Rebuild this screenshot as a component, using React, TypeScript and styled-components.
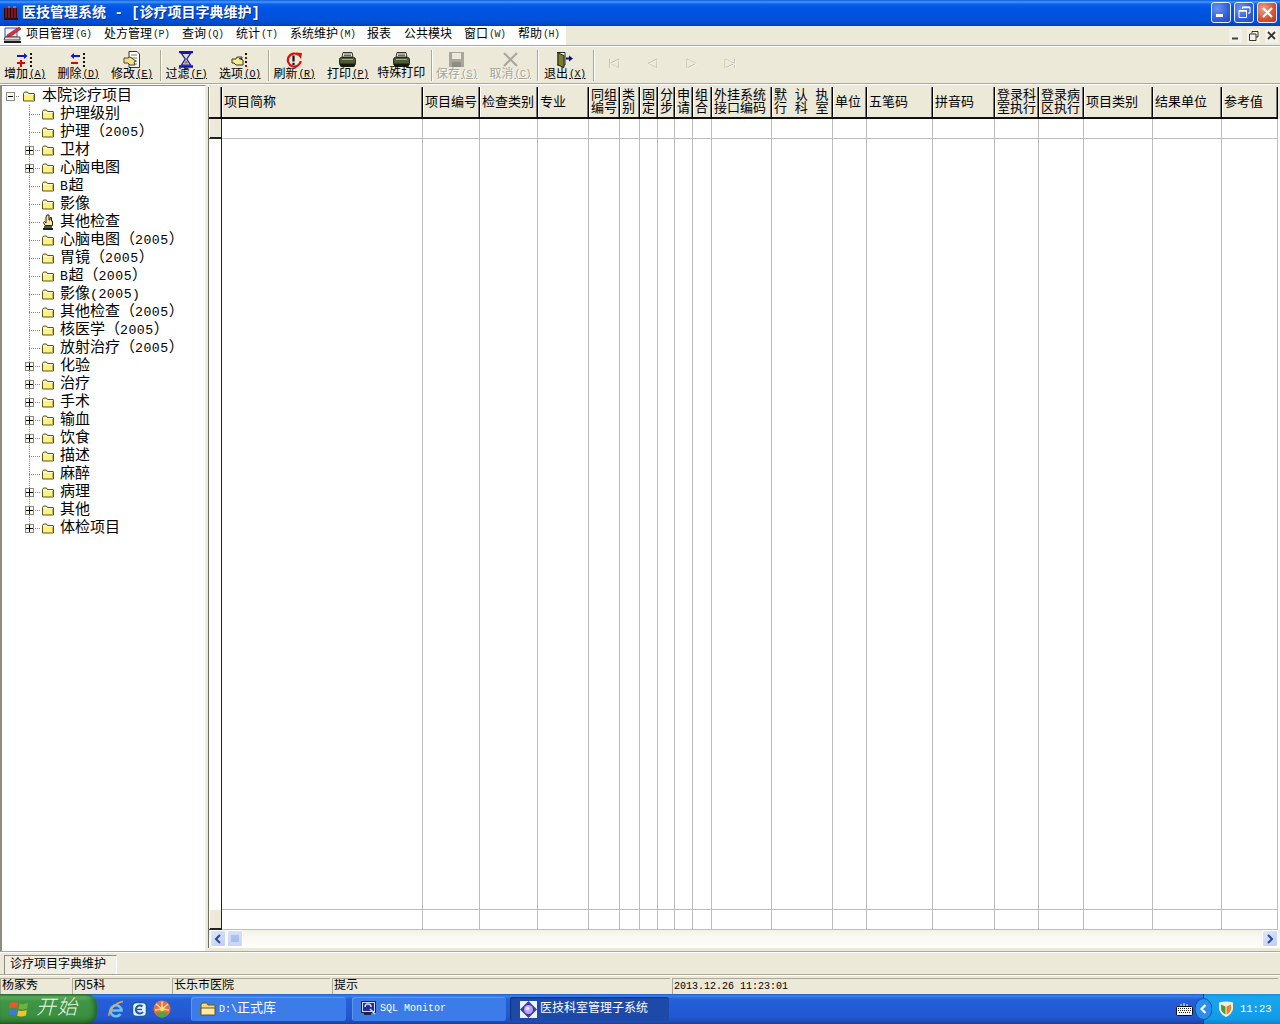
import React from "react";
import styled, { createGlobalStyle } from "styled-components";

const FONT = `"Liberation Mono", "Noto Sans CJK SC", monospace`;
const BEIGE = "#ece9d8";

const Global = createGlobalStyle`
  html, body { margin: 0; padding: 0; background: ${BEIGE}; }
  * { box-sizing: border-box; }
`;

const Desktop = styled.div`
  width: 1280px; height: 1024px; overflow: hidden; display: flex; flex-direction: column;
  background: ${BEIGE}; color: #000; font: 12px/14px ${FONT};
`;

/* ---------- title bar ---------- */
const TitleBar = styled.div`
  height: 26px; flex: none; display: flex; align-items: center; padding: 0 3px 1px 3px;
  background: linear-gradient(180deg, #0a5ee0 0, #4a96f5 2px, #0a62ea 4px, #0055e5 8px, #0052dc 17px, #0050d8 21px, #0246c8 24px, #0340b0 26px);
`;
const TitleText = styled.div`
  flex: 1; font-size: 14px; font-weight: 700; color: #fff; white-space: pre;
  text-shadow: 1px 1px 0 #0a2f90;
`;
const WinBtnRow = styled.div` display: flex; gap: 3px; margin-bottom: 1px; `;
const WinBtn = styled.div<{ $close?: boolean }>`
  width: 20px; height: 21px; border: 1px solid #e8eefc; border-radius: 3px; display: flex;
  align-items: center; justify-content: center;
  background: ${(p) => p.$close
    ? "radial-gradient(circle at 30% 30%, #f0a088, #d8502c 60%, #b83818)"
    : "radial-gradient(circle at 30% 30%, #6a94ee, #2f5fd8 60%, #1e48c0)"};
`;

/* ---------- menu bar ---------- */
const MenuBar = styled.div`
  height: 20px; flex: none; display: flex; align-items: center; background: ${BEIGE};
  border-bottom: 1px solid #aca899; box-shadow: 0 1px 0 #fff;
`;
const MenuList = styled.div`
  width: 566px; height: 19px; display: flex; align-items: center; background: #fff; padding: 0 0 2px 3px;
`;
const MenuIconSlot = styled.div` width: 23px; height: 18px; flex: none; `;
const MenuItem = styled.span<{ $w: number }>`
  width: ${(p) => p.$w}px; flex: none; white-space: nowrap; font-size: 12px;
`;
const Key = styled.span`
  font-size: 10px; letter-spacing: -0.5px; color: #222; margin-left: 1px; vertical-align: 1px;
`;
const MdiButtons = styled.div`
  margin-left: auto; display: flex; gap: 5px; padding-right: 2px; align-items: center;
`;
const MdiBtn = styled.div`
  width: 13px; height: 14px; display: flex; align-items: center; justify-content: center; background: #f4f2e8;
`;

/* ---------- toolbar ---------- */
const Toolbar = styled.div`
  height: 37px; flex: none; margin-top: 1px; display: flex; align-items: stretch; padding-left: 0;
  border-bottom: 1px solid #aca899; background: ${BEIGE}; box-shadow: 0 1px 0 #fff;
  & > :first-child { margin-left: -2px; }
`;
const ToolBtn = styled.div<{ $off?: boolean }>`
  width: 53.5px; flex: none; display: flex; flex-direction: column; align-items: center;
  padding-top: 4px; font-size: 12px; white-space: nowrap;
  color: ${(p) => (p.$off ? "#a5a294" : "#000")};
  text-shadow: ${(p) => (p.$off ? "1px 1px 0 #fff" : "none")};
`;
const NavBtn = styled.div`
  width: 38px; flex: none; display: flex; justify-content: center; padding-top: 11px;
`;
const ToolIcon = styled.div` height: 17px; display: flex; align-items: center; justify-content: center; `;
const ToolLabel = styled.div` line-height: 13px; `;
const ToolKey = styled.span`
  font-size: 10px; letter-spacing: -0.5px; margin-left: 1px; text-decoration: underline; vertical-align: 1px;
`;
const Sep = styled.div<{ $l: number; $r: number }>`
  width: 2px; flex: none; margin: 3px ${(p) => p.$r}px 2px ${(p) => p.$l}px;
  border-left: 1px solid #aca899; border-right: 1px solid #fff;
`;

/* ---------- main ---------- */
const Main = styled.div`
  flex: 1; min-height: 0; display: flex; padding-top: 3px;
`;
const TreePanel = styled.div`
  width: 206px; flex: none; background: #fff; border-left: 2px solid #8f8c7e; border-top: 1px solid #8f8c7e;
  border-right: 1px solid #f0eee4; margin-top: -2px;
  padding-top: 1px;
`;
const TreeRow = styled.div`
  height: 18px; display: flex; align-items: stretch; font-size: 15px; line-height: 20px; white-space: nowrap;
`;
const Branch = styled.div<{ $last?: boolean }>`
  flex: none; display: flex; align-items: center; justify-content: center;
  width: 21px; margin-left: 19px; padding-right: 5px;
  background-image:
    repeating-linear-gradient(90deg, #8a8a8a 0 1px, transparent 1px 2px),
    repeating-linear-gradient(180deg, #8a8a8a 0 1px, transparent 1px 2px);
  background-repeat: no-repeat;
  background-size: 12px 1px, 1px ${(p) => (p.$last ? 9 : 18)}px;
  background-position: 8px 9px, 8px 0;
`;
const RootBranch = styled.div`
  flex: none; width: 17px; margin-right: 4px; display: flex; align-items: center; justify-content: center;
  background-image: repeating-linear-gradient(90deg, #8a8a8a 0 1px, transparent 1px 2px);
  background-repeat: no-repeat;
  background-size: 8px 1px;
  background-position: 12px 9px;
`;
const Expander = styled.div`
  width: 9px; height: 9px; border: 1px solid #8a8a80; background: #f6f5ee; display: flex;
  align-items: center; justify-content: center; color: #000;
`;
const FolderSlot = styled.div` width: 13px; flex: none; display: flex; align-items: center; `;
const TreeLabel = styled.span` margin-left: 5px; `;
const RootLabel = styled.span` margin-left: 6px; `;
const Num = styled.span` font-size: 13.2px; letter-spacing: .5px; `;
const Splitter = styled.div` width: 2px; flex: none; background: ${BEIGE}; `;

const GridPanel = styled.div`
  flex: 1; min-width: 0; display: flex; flex-direction: column; background: ${BEIGE};
`;
const COLS = [13, 201, 57, 58, 51, 31, 20, 18, 17, 18, 19, 60, 61, 34, 66, 62, 44, 45, 69, 69, 56];
const template = COLS.map((c) => `${c}px`).join(" ");

const GridFrame = styled.div`
  flex: none; border-left: 1px solid #6f6d62; background: #fff; height: 861px; display: flex; flex-direction: column;
`;
const HeaderRow = styled.div`
  height: 32px; flex: none; display: grid; grid-template-columns: ${template}; background: ${BEIGE};
`;
const HeaderCell = styled.div`
  background: ${BEIGE}; border-right: 1px solid #000; border-bottom: 2px solid #111;
  box-shadow: inset -1px 0 0 #777, inset 1px 0 0 #fff;
  display: flex; flex-direction: column; justify-content: center; padding-left: 2px;
  font-size: 13px; line-height: 13px; white-space: nowrap; overflow: hidden;
`;
const HeaderLine = styled.span<{ $spread?: boolean }>`
  display: block; ${(p) => (p.$spread ? "text-align-last: justify; padding-right: 5px;" : "")}
`;
const BodyRow = styled.div<{ $h?: number }>`
  display: grid; grid-template-columns: ${template}; flex: ${(p) => (p.$h ? `0 0 ${p.$h}px` : "1")};
  min-height: 0;
`;
const Cell = styled.div` border-right: 1px solid #bdbdbd; border-bottom: 1px solid #bdbdbd; `;
const IndicatorCell = styled.div<{ $plain?: boolean }>`
  border-right: 1px solid #222;
  ${(p) => (p.$plain ? "background:#fff;" : `background:${BEIGE}; border-bottom:2px solid #222; border-left:1px solid #fff;`)}
`;

const HScroll = styled.div`
  height: 18px; flex: none; display: flex; align-items: stretch; padding: 0 0 0 1px;
  background: linear-gradient(180deg, #f3f1e6 0, #f8f7f0 30%, #fefefb 100%);
`;
const ScrollBtn = styled.div`
  width: 16px; height: 17px; flex: none; border: 1px solid #fff; border-radius: 2px;
  background: linear-gradient(135deg, #dfe8fb, #bccdf5); display: flex; align-items: center; justify-content: center;
`;
const ScrollThumb = styled.div`
  width: 16px; height: 17px; flex: none; margin-left: 1px; border: 1px solid #fff; border-radius: 2px;
  background: linear-gradient(180deg, #d6e0f8, #c6d4f6); display: flex; align-items: center; justify-content: center;
`;
const ScrollFill = styled.div` flex: 1; `;
const ScrollEnd = styled.div` width: 2px; flex: none; `;

/* ---------- tab and status ---------- */
const TabBar = styled.div`
  height: 24px; flex: none; padding: 3px 0 0 4px; display: flex; align-items: flex-start;
  border-top: 1px solid #aca899; border-bottom: 1px solid #aca899; box-shadow: inset 0 1px 0 #fff;
`;
const Tab = styled.div`
  width: 113px; height: 19px; padding: 2px 0 0 5px; font-size: 12px; line-height: 15px; white-space: nowrap;
  border-left: 1px solid #8f8c7e; border-top: 1px solid #8f8c7e; border-right: 1px solid #fff; background: #f1efe4;
`;
const StatusBar = styled.div`
  height: 19px; flex: none; display: flex; gap: 2px; padding-top: 2px; border-top: 1px solid #fff;
`;
const StatusCell = styled.div<{ $w: number; $mono?: boolean }>`
  width: ${(p) => p.$w}px; flex: none; height: 17px; padding: 0 0 0 1px; white-space: nowrap; overflow: hidden;
  border-left: 1px solid #aca899; border-top: 1px solid #aca899; line-height: 15px;
  font-size: ${(p) => (p.$mono ? 10 : 12)}px;
`;

/* ---------- taskbar ---------- */
const Taskbar = styled.div`
  height: 30px; flex: none; display: flex; align-items: stretch; color: #fff;
  background: linear-gradient(180deg, #1f5cc8 0, #3a82ee 2px, #2560d8 5px, #2258d2 22px, #1e4fbe 27px, #1a3f9a 30px);
`;
const StartBtn = styled.div`
  width: 97px; flex: none; display: flex; align-items: center; padding-left: 9px; gap: 7px;
  border-radius: 0 11px 11px 0;
  background: linear-gradient(180deg, #2f7a3c 0, #5fae5c 3px, #3f9645 7px, #3a8f40 22px, #2c7a30 28px, #245f28 30px);
  box-shadow: inset -3px 0 4px rgba(10,50,10,.45);
`;
const StartText = styled.span`
  font-size: 20px; font-style: italic; color: #f2f6ee; letter-spacing: 1px; font-weight: 300;
`;
const Quick = styled.div`
  width: 94px; flex: none; display: flex; align-items: center; gap: 5px; padding-left: 10px;
`;
const TaskBtn = styled.div<{ $active?: boolean; $w: number; $gap: number }>`
  width: ${(p) => p.$w}px; margin-right: ${(p) => p.$gap}px; flex: none; height: 24px; align-self: center;
  display: flex; align-items: center; gap: 3px; padding-left: ${(p) => (p.$active ? 10 : 9)}px;
  border-radius: 3px; font-size: 10px; white-space: nowrap;
  background: ${(p) => (p.$active ? "#1d4aa8" : "#3c7ce8")};
  box-shadow: ${(p) => (p.$active ? "inset 1px 1px 1px #123578" : "inset 1px 1px 0 #5f98f0")};
`;
const TaskZh = styled.span` font-size: 13px; `;
const TaskTitle = styled.span` font-size: 12px; `;
const Spacer = styled.div` flex: 1; `;
const BarIcon = styled.div` width: 18px; flex: none; align-self: center; display: flex; margin-right: 9px; `;
const Tray = styled.div`
  width: 77px; flex: none; display: flex; align-items: center; gap: 7px; padding-left: 9px; font-size: 10.5px;
  background: linear-gradient(180deg, #1790dc 0, #18a6ee 3px, #129be8 25px, #0f80cc 30px);
  border-left: 1px solid #0a3a8a;
`;
const TrayChevron = styled.div`
  width: 17px; height: 22px; flex: none; margin-left: -9px; margin-right: -9px; position: relative; left: -9px;
`;

/* ---------- icons ---------- */
const Folder = () => (
  <svg width="12" height="11" viewBox="0 0 12 11">
    <path d="M.5 2.500 L1.500 1 H4.500 L5.500 2.500 H11 Q11.500 2.500 11.500 3 V10 H.5Z" fill="#fff27a" stroke="#55532a" />
    <path d="M1 3.500H11" stroke="#fffdd0" />
    <path d="M10.500 4V10" stroke="#c9b84a" />
  </svg>
);
const HandIcon = () => (
  <svg width="12" height="17" viewBox="0 0 12 17">
    <path d="M5 1h2v5h1V3.500h1.500V7h1v4.500H3L1.500 8.500 2.500 7.500 4 9V3Z" fill="#f3e9a0" stroke="#2a2410" strokeWidth="1" />
    <rect x="2" y="12" width="8" height="2" fill="#5a5a40" />
    <rect x="1" y="14" width="10" height="2" fill="#08203a" />
  </svg>
);
const AppMark = () => (
  <svg width="19" height="18" viewBox="0 0 19 18">
    <rect x="1" y="4" width="14" height="11" fill="#1c0a0e" />
    <path d="M3 4v11M6 3v12M9 3v12M12 3v12M14.500 4v11" stroke="#a81c28" strokeWidth="1.400" />
    <path d="M5 3h2M10 3h3" stroke="#c8a860" />
    <rect x="1" y="14" width="14" height="2" fill="#2a1010" />
  </svg>
);
const MenuMark = () => (
  <svg width="20" height="18" viewBox="0 0 20 18">
    <path d="M2 2H14V11H2Z" fill="#eef0fa" stroke="#3a50a8" />
    <path d="M4 9L16 1l2 2L7 11H4Z" fill="#e02e38" stroke="#8a1a20" strokeWidth=".6" />
    <path d="M2 11h15v3H1Z" fill="#e7e2d0" stroke="#444" />
    <path d="M1 15h17v2H1Z" fill="#1a1a1a" />
  </svg>
);
const AddIcon = ({ minus }: { minus?: boolean }) => (
  <svg width="18" height="16" viewBox="0 0 18 16">
    {minus ? (
      <>
        <path d="M3 4 H11" stroke="#1414c0" strokeWidth="2" />
        <path d="M5 1v6L1.500 4Z" fill="#1414c0" />
        <path d="M2 11h7" stroke="#e00000" strokeWidth="2" />
      </>
    ) : (
      <>
        <path d="M1 4 H9" stroke="#1414c0" strokeWidth="2" />
        <path d="M8 1v6l3.500-3Z" fill="#1414c0" />
        <path d="M1 11h8M5 8v7" stroke="#e00000" strokeWidth="2" />
      </>
    )}
    <path d="M15 1v2M15 5v2M15 9v2M15 13v2" stroke="#111" strokeWidth="2" />
  </svg>
);
const EditIcon = () => (
  <svg width="18" height="17" viewBox="0 0 18 17">
    <path d="M6 .5H14L16.500 3V16.500H6Z" fill="#fff" stroke="#333" />
    <path d="M8 4h6M8 7h6M8 10h6M8 13h6" stroke="#777" />
    <path d="M1 7h4l2-1 6 4-2 1 1 3-5 0-2-2H1Z" fill="#f7e27a" stroke="#444" />
  </svg>
);
const GlassIcon = () => (
  <svg width="14" height="17" viewBox="0 0 14 17">
    <path d="M0 1h14M0 15.500h14" stroke="#1616a8" strokeWidth="2.400" />
    <path d="M2.500 2.500H11.500L7.800 8l3.700 6H2.500L6.200 8Z" fill="#dcd8b8" stroke="#1616a8" strokeWidth="1.200" />
    <path d="M5 12.500L7 9l2 3.500Z" fill="#8a7a30" />
  </svg>
);
const OptionIcon = () => (
  <svg width="18" height="16" viewBox="0 0 18 16">
    <path d="M1 7h4l1-2h5v1.500H8L12 8v5H5L3 11H1Z" fill="#f6ee82" stroke="#333" />
    <path d="M15 1v2M15 9v2" stroke="#111" strokeWidth="2" />
    <path d="M15 5v2M15 13v2" stroke="#c00000" strokeWidth="2" />
  </svg>
);
const RefreshIcon = () => (
  <svg width="17" height="16" viewBox="0 0 17 16">
    <path d="M12.500 3A6.500 6.500 0 1 0 14.800 9" fill="none" stroke="#e00c0c" strokeWidth="2.200" />
    <path d="M10 .5L16 1l-1 6Z" fill="#e00c0c" />
    <path d="M7.500 3.500v6" stroke="#111" strokeWidth="2.200" />
    <rect x="6.400" y="10.800" width="2.200" height="2.200" fill="#111" />
  </svg>
);
const PrinterIcon = () => (
  <svg width="17" height="16" viewBox="0 0 17 16">
    <path d="M4 .5H13L14 5H3Z" fill="#ecebdc" stroke="#333" />
    <path d="M5 2h7M5 3.500h7" stroke="#666" />
    <rect x=".5" y="5.500" width="16" height="8" rx="2" fill="#4e5c34" stroke="#22280f" />
    <path d="M1 11.500H16V13.500Q16 15 14 15H3Q1 15 1 13.500Z" fill="#171a0a" />
    <path d="M3 7.500H14" stroke="#a2b070" />
  </svg>
);
const SaveIcon = () => (
  <svg width="15" height="15" viewBox="0 0 15 15">
    <rect x="0" y="0" width="15" height="15" fill="#a9a79c" />
    <rect x="3" y="1" width="9" height="6" fill="#ece9d8" />
    <rect x="3" y="10" width="9" height="5" fill="#8e8c82" />
  </svg>
);
const CancelIcon = () => (
  <svg width="15" height="15" viewBox="0 0 15 15">
    <path d="M1 1L14 14M14 1L1 14" stroke="#aaa89c" strokeWidth="2.200" />
  </svg>
);
const ExitIcon = () => (
  <svg width="16" height="16" viewBox="0 0 16 16">
    <path d="M0 .5H8V13H0Z" fill="#fff" stroke="#222" />
    <path d="M1 1L7 3.500V15.500L1 13Z" fill="#7f7f22" stroke="#222" />
    <path d="M9 6.500h4" stroke="#10107a" strokeWidth="2" />
    <path d="M12 3.500v6L16 6.500Z" fill="#10107a" />
  </svg>
);
const NavIcon = ({ d }: { d: string }) => (
  <svg width="14" height="11" viewBox="0 0 14 11">
    <path d={d} fill="none" stroke="#b8b5a6" />
    <path d={d} fill="none" stroke="#fff" transform="translate(.6 .6)" opacity=".6" />
  </svg>
);
const Plus = () => (
  <svg width="7" height="7" viewBox="0 0 7 7"><path d="M0 3.500H7M3.500 0V7" stroke="#000" /></svg>
);
const Minus = () => (
  <svg width="7" height="7" viewBox="0 0 7 7"><path d="M1 3.500H6" stroke="#000" /></svg>
);
const WinFlag = () => (
  <svg width="20" height="18" viewBox="0 0 20 18">
    <path d="M1 3Q4 1 9 3L8 8.500Q4 6.500 0 8.500Z" fill="#e8592c" />
    <path d="M10.500 3.500Q14 5 19 3L18 8.500Q14 10 9.500 9Z" fill="#6fb33a" />
    <path d="M0 10Q4 8 8 10L7 16Q3 14 -1 16Z" fill="#3f78d8" />
    <path d="M9.200 10.500Q13 11.500 17.800 10L17 15.500Q13 17 8.200 16Z" fill="#f2c02c" />
  </svg>
);
const IeIcon = () => (
  <svg width="19" height="19" viewBox="0 0 19 19">
    <path d="M4 10.500H14.500A5.500 5.500 0 1 0 13.500 14" fill="none" stroke="#6cc3f4" strokeWidth="2.600" />
    <path d="M2 16C1 11 8 3 16 1.500" fill="none" stroke="#f0a83c" strokeWidth="1.400" />
  </svg>
);
const MailIcon = () => (
  <svg width="17" height="17" viewBox="0 0 17 17">
    <rect x="1.500" y="1.500" width="14" height="14" rx="4" fill="#e8f2fc" stroke="#1a58a8" strokeWidth="1.500" />
    <path d="M11.500 5.500A4 4 0 1 0 12 11" fill="none" stroke="#1a58a8" strokeWidth="2" />
    <path d="M6 8.500H11" stroke="#1a58a8" strokeWidth="1.500" />
  </svg>
);
const OrangeIcon = () => (
  <svg width="18" height="18" viewBox="0 0 18 18">
    <circle cx="9" cy="9" r="8.500" fill="#e6713c" />
    <path d="M9 9V1.500M9 9L3 4M9 9L15 4M9 9L2 10M9 9L16 10" stroke="#ffd9a8" strokeWidth="1.500" />
    <circle cx="9" cy="9" r="2.200" fill="#f7e46a" />
    <path d="M3 13.500Q9 10.500 15 13.500Q12 17.500 9 17.500T3 13.500Z" fill="#49a44a" />
  </svg>
);
const TaskFolder = () => (
  <svg width="16" height="14" viewBox="0 0 16 14">
    <path d="M1 3L2 1H7L8 3H15V13H1Z" fill="#f7d774" stroke="#6a5a20" />
    <path d="M1 6H15V13H1Z" fill="#ffeca8" stroke="#6a5a20" />
  </svg>
);
const MonitorIcon = () => (
  <svg width="16" height="16" viewBox="0 0 16 16">
    <rect x=".5" y=".5" width="14" height="11" fill="#d8d8e8" stroke="#20203a" />
    <rect x="2" y="2" width="11" height="8" fill="#2a2a9a" />
    <path d="M4 6a3 3 0 0 1 6 0M9 8l5 5" stroke="#c0e0ff" strokeWidth="1.500" fill="none" />
    <path d="M3 13H10" stroke="#20203a" strokeWidth="2" />
  </svg>
);
const DiamondIcon = () => (
  <svg width="17" height="17" viewBox="0 0 17 17">
    <rect width="17" height="17" fill="#eef2fc" />
    <path d="M8.500 0L17 8.500 8.500 17 0 8.500Z" fill="#3a3aa8" />
    <circle cx="8.500" cy="8.500" r="4.500" fill="#b7a3f2" />
    <circle cx="7.500" cy="7.500" r="2" fill="#e8e0ff" />
  </svg>
);
const KeyboardIcon = () => (
  <svg width="17" height="13" viewBox="0 0 17 13">
    <rect x=".5" y="3.500" width="16" height="9" rx="1" fill="#f4f4f4" stroke="#111" />
    <path d="M2 5.500H15M2 7.500H15M3 9.500H14" stroke="#222" strokeDasharray="1 1" />
    <path d="M5 1v2M8 0v3M11 1v2" stroke="#fff" />
  </svg>
);
const Chevron = () => (
  <svg width="17" height="22" viewBox="0 0 17 22">
    <ellipse cx="8.500" cy="11" rx="8.500" ry="10.500" fill="#2b8ee8" stroke="#1650b0" />
    <path d="M10.500 7L6.500 11l4 4" stroke="#fff" strokeWidth="2.200" fill="none" />
  </svg>
);
const ShieldIcon = () => (
  <svg width="14" height="16" viewBox="0 0 14 16">
    <path d="M0 1.500Q7 -.5 14 1.500V8Q13 13 7 16Q1 13 0 8Z" fill="#f4efdc" />
    <path d="M2 3.500L6.500 5.500V13.500Q2 11 2 7.500Z" fill="#4f9c3a" />
    <path d="M12 3.500L7.500 5.500V13.500Q12 11 12 7.500Z" fill="#e5842a" />
  </svg>
);

/* ---------- data ---------- */
const MENUS: [string, string, number][] = [
  ["项目管理", "(G)", 78], ["处方管理", "(P)", 78], ["查询", "(Q)", 54], ["统计", "(T)", 54],
  ["系统维护", "(M)", 77], ["报表", "", 37], ["公共模块", "", 60], ["窗口", "(W)", 54], ["帮助", "(H)", 48],
];
const HEADERS: { lines: string[]; spread?: boolean }[] = [
  { lines: [""] }, { lines: ["项目简称"] }, { lines: ["项目编号"] }, { lines: ["检查类别"] }, { lines: ["专业"] },
  { lines: ["同组", "编号"] }, { lines: ["类", "别"] }, { lines: ["固", "定"] }, { lines: ["分", "步"] },
  { lines: ["申", "请"] }, { lines: ["组", "合"] }, { lines: ["外挂系统", "接口编码"] },
  { lines: ["默 认 执", "行 科 室"], spread: true }, { lines: ["单位"] }, { lines: ["五笔码"] }, { lines: ["拼音码"] },
  { lines: ["登录科", "室执行"] }, { lines: ["登录病", "区执行"] }, { lines: ["项目类别"] }, { lines: ["结果单位"] }, { lines: ["参考值"] },
];
type Node = { label: string; plus?: boolean; hand?: boolean };
const TREE: Node[] = [
  { label: "护理级别" }, { label: "护理（2005）" }, { label: "卫材", plus: true }, { label: "心脑电图", plus: true },
  { label: "B超" }, { label: "影像" }, { label: "其他检查", hand: true }, { label: "心脑电图（2005）" },
  { label: "胃镜（2005）" }, { label: "B超（2005）" }, { label: "影像(2005)" }, { label: "其他检查（2005）" },
  { label: "核医学（2005）" }, { label: "放射治疗（2005）" }, { label: "化验", plus: true }, { label: "治疗", plus: true },
  { label: "手术", plus: true }, { label: "输血", plus: true }, { label: "饮食", plus: true }, { label: "描述" },
  { label: "麻醉" }, { label: "病理", plus: true }, { label: "其他", plus: true }, { label: "体检项目", plus: true },
];
const withNums = (s: string) =>
  s.split(/([A-Za-z0-9()]+)/).map((part, i) => (i % 2 ? <Num key={i}>{part}</Num> : part));

const Tool = ({ icon, label, k, off }: { icon: React.ReactNode; label: string; k: string; off?: boolean }) => (
  <ToolBtn $off={off}>
    <ToolIcon>{icon}</ToolIcon>
    <ToolLabel>{label}<ToolKey>({k})</ToolKey></ToolLabel>
  </ToolBtn>
);

export default function App() {
  return (
    <Desktop>
      <Global />
      <TitleBar>
        <AppMark />
        <TitleText>医技管理系统 - [诊疗项目字典维护]</TitleText>
        <WinBtnRow>
          <WinBtn><svg width="12" height="12" viewBox="0 0 12 12"><rect x="1" y="8" width="7" height="3" fill="#fff" /></svg></WinBtn>
          <WinBtn><svg width="13" height="13" viewBox="0 0 13 13"><path d="M4.500 3V1H12V7H10M1 4.500H8.500V11.500H1Z" fill="none" stroke="#fff" /><path d="M4 1.500H12M1 5H8.500" stroke="#fff" strokeWidth="1.500" /></svg></WinBtn>
          <WinBtn $close><svg width="13" height="13" viewBox="0 0 13 13"><path d="M2 2L11 11M11 2L2 11" stroke="#fff" strokeWidth="2.200" /></svg></WinBtn>
        </WinBtnRow>
      </TitleBar>

      <MenuBar>
        <MenuList>
          <MenuIconSlot><MenuMark /></MenuIconSlot>
          {MENUS.map(([t, k, w]) => (
            <MenuItem key={t} $w={w}>{t}{k && <Key>{k}</Key>}</MenuItem>
          ))}
        </MenuList>
        <MdiButtons>
          <MdiBtn><svg width="9" height="9" viewBox="0 0 9 9"><path d="M1 7.500H7" stroke="#444" strokeWidth="2" /></svg></MdiBtn>
          <MdiBtn><svg width="10" height="10" viewBox="0 0 10 10"><path d="M3 2.500V.5H9V6H7M.5 3H7V9.500H.5Z" fill="none" stroke="#333" /></svg></MdiBtn>
          <MdiBtn><svg width="9" height="9" viewBox="0 0 9 9"><path d="M1 1L8 8M8 1L1 8" stroke="#333" strokeWidth="1.800" /></svg></MdiBtn>
        </MdiButtons>
      </MenuBar>

      <Toolbar>
        <Tool icon={<AddIcon />} label="增加" k="A" />
        <Tool icon={<AddIcon minus />} label="删除" k="D" />
        <Tool icon={<EditIcon />} label="修改" k="E" />
        <Sep $l={1} $r={-2} />
        <Tool icon={<GlassIcon />} label="过滤" k="F" />
        <Tool icon={<OptionIcon />} label="选项" k="O" />
        <Sep $l={1} $r={-2} />
        <Tool icon={<RefreshIcon />} label="刷新" k="R" />
        <Tool icon={<PrinterIcon />} label="打印" k="P" />
        <ToolBtn>
          <ToolIcon><PrinterIcon /></ToolIcon>
          <ToolLabel>特殊打印</ToolLabel>
        </ToolBtn>
        <Sep $l={3} $r={-3} />
        <Tool icon={<SaveIcon />} label="保存" k="S" off />
        <Tool icon={<CancelIcon />} label="取消" k="C" off />
        <Sep $l={0} $r={-1} />
        <Tool icon={<ExitIcon />} label="退出" k="X" />
        <Sep $l={1} $r={1} />
        <NavBtn><NavIcon d="M1.500 1V10M1.500 5.500L11 1V10Z" /></NavBtn>
        <NavBtn><NavIcon d="M2 5.500L11 1V10Z" /></NavBtn>
        <NavBtn><NavIcon d="M12 5.500L3 1V10Z" /></NavBtn>
        <NavBtn><NavIcon d="M12.500 1V10M12.500 5.500L3 1V10Z" /></NavBtn>
      </Toolbar>

      <Main>
        <TreePanel>
          <TreeRow>
            <RootBranch><Expander><Minus /></Expander></RootBranch>
            <FolderSlot><Folder /></FolderSlot>
            <RootLabel>本院诊疗项目</RootLabel>
          </TreeRow>
          {TREE.map((n, i) => (
            <TreeRow key={n.label}>
              <Branch $last={i === TREE.length - 1}>{n.plus && <Expander><Plus /></Expander>}</Branch>
              <FolderSlot>{n.hand ? <HandIcon /> : <Folder />}</FolderSlot>
              <TreeLabel>{withNums(n.label)}</TreeLabel>
            </TreeRow>
          ))}
        </TreePanel>
        <Splitter />
        <GridPanel>
          <GridFrame>
            <HeaderRow>
              {HEADERS.map((h, i) => (
                <HeaderCell key={i}>
                  {h.lines.map((l) => <HeaderLine key={l} $spread={h.spread}>{l}</HeaderLine>)}
                </HeaderCell>
              ))}
            </HeaderRow>
            <BodyRow $h={20}>
              <IndicatorCell />
              {COLS.slice(1).map((_, i) => <Cell key={i} />)}
            </BodyRow>
            <BodyRow>
              <IndicatorCell $plain />
              {COLS.slice(1).map((_, i) => <Cell key={i} />)}
            </BodyRow>
            <BodyRow $h={20}>
              <IndicatorCell />
              {COLS.slice(1).map((_, i) => <Cell key={i} />)}
            </BodyRow>
            <HScroll>
              <ScrollBtn><svg width="8" height="10" viewBox="0 0 8 10"><path d="M6 1L2 5l4 4" stroke="#2c4a8a" strokeWidth="2" fill="none" /></svg></ScrollBtn>
              <ScrollThumb><svg width="8" height="7" viewBox="0 0 8 7"><path d="M1 0V7M3 0V7M5 0V7M7 0V7" stroke="#8aa4e0" /></svg></ScrollThumb>
              <ScrollFill />
              <ScrollBtn><svg width="8" height="10" viewBox="0 0 8 10"><path d="M2 1L6 5l-4 4" stroke="#2c4a8a" strokeWidth="2" fill="none" /></svg></ScrollBtn>
              <ScrollEnd />
            </HScroll>
          </GridFrame>
        </GridPanel>
      </Main>

      <TabBar><Tab>诊疗项目字典维护</Tab></TabBar>
      <StatusBar>
        <StatusCell $w={70}>杨家秀</StatusCell>
        <StatusCell $w={98}>内5科</StatusCell>
        <StatusCell $w={158}>长乐市医院</StatusCell>
        <StatusCell $w={338}>提示</StatusCell>
        <StatusCell $w={606} $mono>2013.12.26 11:23:01</StatusCell>
      </StatusBar>

      <Taskbar>
        <StartBtn><WinFlag /><StartText>开始</StartText></StartBtn>
        <Quick><IeIcon /><MailIcon /><OrangeIcon /></Quick>
        <TaskBtn $w={155} $gap={6}><TaskFolder /><span>D:\<TaskZh>正式库</TaskZh></span></TaskBtn>
        <TaskBtn $w={154} $gap={4}><MonitorIcon />SQL Monitor</TaskBtn>
        <TaskBtn $w={159} $gap={0} $active><DiamondIcon /><TaskTitle>医技科室管理子系统</TaskTitle></TaskBtn>
        <Spacer />
        <BarIcon><KeyboardIcon /></BarIcon>
        <Tray>
          <TrayChevron><Chevron /></TrayChevron>
          <ShieldIcon />
          <span>11:23</span>
        </Tray>
      </Taskbar>
    </Desktop>
  );
}
